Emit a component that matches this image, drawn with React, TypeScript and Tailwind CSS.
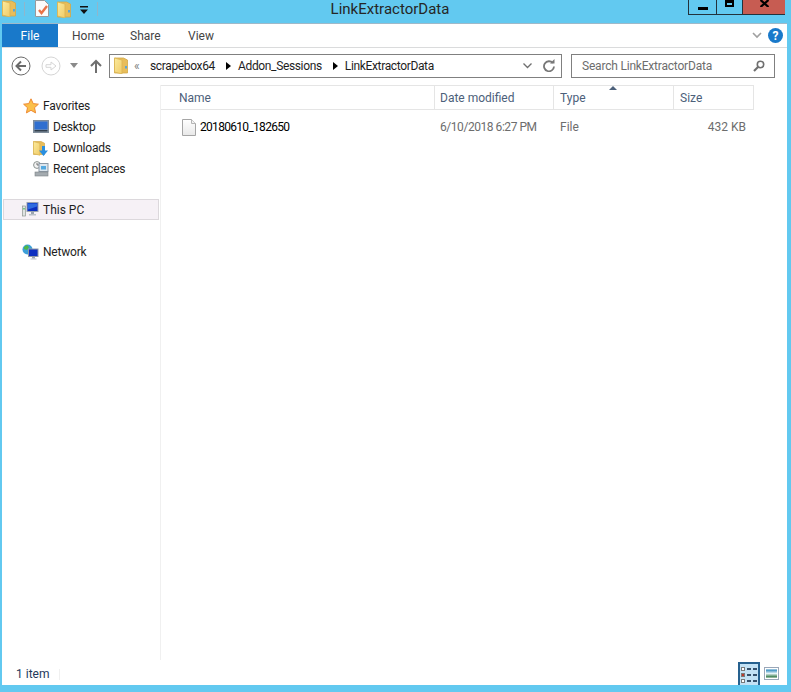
import React from "react"

function FolderIcon({ className }: { className?: string }) {
  return (
    <svg viewBox="0 0 14 17" className={className}>
      <defs>
        <linearGradient id="fold" x1="0" y1="0" x2="1" y2="1">
          <stop offset="0" stopColor="#fbeb9e" />
          <stop offset="1" stopColor="#f0cb68" />
        </linearGradient>
      </defs>
      <path d="M0.5 1h9l4 2v13h-13z" fill="#e8bd5a" stroke="#d2a848" strokeWidth="0.8" />
      <path d="M0.5 1l7.5 2v14L0.5 15z" fill="url(#fold)" stroke="#d9b453" strokeWidth="0.8" />
      <rect x="11" y="9" width="2" height="2.5" fill="#5aa6d8" />
    </svg>
  )
}

function BackButton({ disabled }: { disabled?: boolean }) {
  const c = disabled ? "#d5d5d5" : "#6a6a6a"
  return (
    <svg width="20" height="20" viewBox="0 0 20 20">
      <circle cx="10" cy="10" r="9" fill="#fff" stroke={c} strokeWidth="1" />
      {disabled ? (
        <path d="M5 8.7h5V6l5 4-5 4v-2.7H5z" fill="none" stroke={c} strokeWidth="1" />
      ) : (
        <path d="M15 10H6M10 5.5L5.5 10l4.5 4.5" fill="none" stroke={c} strokeWidth="2" />
      )}
    </svg>
  )
}

function Row({ icon, label, indent }: { icon: React.ReactNode; label: string; indent?: boolean }) {
  return (
    <div className={`flex h-[21px] items-center gap-[4px] ${indent ? "pl-[30px]" : "pl-[20px]"}`}>
      <div className="flex h-[18px] w-[17px] items-center justify-center">{icon}</div>
      <span className="text-[12px] tracking-[-0.2px] text-[#1e1e1e]">{label}</span>
    </div>
  )
}

function PcIcon({ small }: { small?: boolean }) {
  return (
    <svg width="17" height="15" viewBox="0 0 17 15">
      <rect x="5" y="0.5" width="11" height="9" fill="#0c2fc0" stroke="#9aa4b0" />
      <path d="M6 1.5h9v3l-9 3z" fill="#2f6be0" />
      <rect x="9" y="10" width="3" height="2" fill="#9aa4b0" />
      <rect x="7" y="12" width="7" height="1.5" fill="#b9c0c8" />
      {small && <rect x="0.5" y="4" width="3" height="10" fill="#dfe3e2" stroke="#8d9490" strokeWidth="0.7" />}
      {small && <rect x="1.4" y="6" width="1.2" height="1.5" fill="#39b54a" />}
    </svg>
  )
}

export default function App() {
  return (
    <div className="flex h-[692px] w-[791px] flex-col overflow-hidden bg-[#62c9f0] font-['Roboto',sans-serif]">
      {/* Title bar */}
      <div className="flex h-[23px] shrink-0">
        <div className="flex w-[280px] items-start">
          <FolderIcon className="ml-[2px] h-[17px] w-[14px]" />
          <div className="ml-[8px] mt-[2px] h-[14px] w-px bg-[#8fb6cc]" />
          <svg width="15" height="17" viewBox="0 0 15 17" className="ml-[10px]">
            <path d="M0.5 0.5h9l4 4v12h-13z" fill="#fbfbfb" stroke="#9a9a9a" />
            <path d="M4 10l2.5 3L12 6" fill="none" stroke="#ea7348" strokeWidth="2.4" />
          </svg>
          <FolderIcon className="ml-[7px] mt-px h-[17px] w-[14px]" />
          <svg width="8" height="9" viewBox="0 0 8 9" className="ml-[9px] mt-[6px]">
            <path d="M0 0h8v1.5H0zM0 3.5h8L4 8z" fill="#111" />
          </svg>
          <div className="ml-[9px] mt-[2px] h-[14px] w-px bg-[#8fb6cc]" />
        </div>
        <div className="-mt-[1px] w-[220px] text-center text-[15px] leading-[20px] text-[#262626]">LinkExtractorData</div>
        <div className="flex flex-1 justify-end">
          <div className="flex h-[15px] items-start pr-[6px]">
            <div className="flex h-[15px] w-[29px] items-center justify-center border border-t-0 border-[#23323c]">
              <div className="mt-[2px] h-[3px] w-[10px] bg-black" />
            </div>
            <div className="flex h-[15px] w-[26px] items-start justify-center border-b border-r border-[#23323c]">
              <div className="h-[7px] w-[9px] border-2 border-t-[3px] border-black" />
            </div>
            <div className="flex h-[15px] w-[42px] items-start justify-center border-b border-[#23323c] bg-[#c75c52]">
              <svg width="9" height="7" viewBox="0 0 9 7">
                <path d="M0.5 0l8 7M8.5 0l-8 7" stroke="#000" strokeWidth="2.2" />
              </svg>
            </div>
          </div>
        </div>
      </div>

      {/* Window client */}
      <div className="ml-[2px] mr-[4px] flex h-[662px] flex-col border-t border-[#9fb9c9] bg-white">
        {/* Ribbon tabs */}
        <div className="flex h-[24px] shrink-0 items-center border-b border-[#dadbdc]">
          <div className="flex h-[23px] w-[56px] items-center justify-center bg-[#1979ca] text-[12px] text-white">File</div>
          <span className="ml-[14px] w-[58px] text-[12px] text-[#444]">Home</span>
          <span className="w-[58px] text-[12px] text-[#444]">Share</span>
          <span className="text-[12px] text-[#444]">View</span>
          <svg width="10" height="7" viewBox="0 0 10 7" className="ml-auto">
            <path d="M1 1l4 4 4-4" fill="none" stroke="#a0a0a0" strokeWidth="1.6" />
          </svg>
          <div className="ml-[6px] mr-[4px] flex h-[15px] w-[15px] items-center justify-center rounded-full bg-[#1979ca] text-[12px] font-bold text-white">?</div>
        </div>

        {/* Address row */}
        <div className="flex h-[37px] shrink-0 items-center pb-[2px]">
          <div className="ml-[9px]"><BackButton /></div>
          <div className="ml-[10px]"><BackButton disabled /></div>
          <svg width="8" height="5" viewBox="0 0 8 5" className="ml-[9px]">
            <path d="M0 0h8L4 5z" fill="#8a8a8a" />
          </svg>
          <svg width="12" height="14" viewBox="0 0 12 14" className="ml-[12px]">
            <path d="M6 14V2M1 7l5-5 5 5" fill="none" stroke="#6f6f6f" strokeWidth="2" />
          </svg>
          <div className="ml-[7px] flex h-[24px] w-[453px] items-center border border-[#808080] pl-[4px] text-[12px] tracking-[-0.35px] text-[#1e1e1e]">
            <FolderIcon className="h-[17px] w-[14px]" />
            <span className="ml-[6px] w-[16px] text-[#808080]">«</span>
            <span>scrapebox64</span>
            <span className="ml-[11px] mr-[7px] h-0 w-0 border-y-[4px] border-l-[5px] border-y-transparent border-l-black" />
            <span>Addon_Sessions</span>
            <span className="ml-[11px] mr-[7px] h-0 w-0 border-y-[4px] border-l-[5px] border-y-transparent border-l-black" />
            <span>LinkExtractorData</span>
            <svg width="9" height="6" viewBox="0 0 9 6" className="ml-auto">
              <path d="M0.5 0.5l4 4 4-4" fill="none" stroke="#6f6f6f" strokeWidth="1.3" />
            </svg>
            <svg width="12" height="13" viewBox="0 0 12 13" className="ml-[11px] mr-[6px]">
              <path d="M9.8 4A5 5 0 1 0 11 7.5" fill="none" stroke="#777" strokeWidth="1.8" />
              <path d="M7 4.5h4.5V0z" fill="#777" />
            </svg>
          </div>
          <div className="ml-[9px] flex h-[24px] w-[204px] items-center border border-[#808080] pl-[10px] text-[12px] tracking-[-0.2px] text-[#6d6d6d]">
            <span>Search LinkExtractorData</span>
            <svg width="12" height="12" viewBox="0 0 12 12" className="ml-auto mr-[9px]">
              <circle cx="7.5" cy="4.5" r="3.2" fill="none" stroke="#6f6f6f" strokeWidth="1.6" />
              <path d="M5 7L1 11" stroke="#6f6f6f" strokeWidth="2.2" />
            </svg>
          </div>
        </div>

        {/* Body */}
        <div className="flex flex-1">
          {/* Navigation pane */}
          <div className="w-[159px] shrink-0 border-r border-[#f0f0f0] pt-[10px]">
            <Row
              label="Favorites"
              icon={
                <svg width="16" height="16" viewBox="0 0 16 16">
                  <path d="M8 0.8l2.2 4.8 5.2.6-3.9 3.5 1.1 5.2L8 12.3l-4.6 2.6 1.1-5.2L.6 6.2l5.2-.6z" fill="#fbc04a" stroke="#ee8a35" />
                </svg>
              }
            />
            <Row
              indent
              label="Desktop"
              icon={
                <svg width="16" height="13" viewBox="0 0 16 13">
                  <rect x="0.5" y="0.5" width="15" height="12" fill="#8e9dac" stroke="#7f8d9b" />
                  <rect x="1.5" y="1.5" width="13" height="8" fill="#2f6fd0" />
                  <rect x="1.5" y="10" width="13" height="1.5" fill="#33404d" />
                </svg>
              }
            />
            <Row
              indent
              label="Downloads"
              icon={
                <div className="relative h-[16px] w-[15px]">
                  <FolderIcon className="h-[16px] w-[12px]" />
                  <svg width="9" height="10" viewBox="0 0 9 10" className="absolute bottom-0 right-0">
                    <path d="M3 0h3v4.5h3L4.5 10 0 4.5h3z" fill="#2a8fe0" />
                  </svg>
                </div>
              }
            />
            <Row
              indent
              label="Recent places"
              icon={
                <svg width="16" height="16" viewBox="0 0 16 16">
                  <circle cx="4" cy="4" r="3.4" fill="#f3f3f3" stroke="#8a9290" />
                  <path d="M4 2v2h2" fill="none" stroke="#555" strokeWidth="0.8" />
                  <rect x="6" y="2.5" width="9" height="8" fill="#dce6ee" stroke="#8b98a5" />
                  <rect x="8" y="5" width="5" height="3.5" fill="#54a9e0" />
                  <rect x="2" y="11" width="13" height="4" fill="#a4abb0" stroke="#7d8487" strokeWidth="0.6" />
                </svg>
              }
            />
            <div className="mx-px mt-[20px] flex h-[21px] w-[156px] items-center gap-[4px] border border-[#dcd8dc] bg-[#f6f1f6] pl-[18px]">
              <div className="flex w-[17px] justify-center"><PcIcon small /></div>
              <span className="text-[12px] text-[#1e1e1e]">This PC</span>
            </div>
            <div className="mt-[21px]">
              <Row
                label="Network"
                icon={
                  <svg width="17" height="16" viewBox="0 0 17 16">
                    <circle cx="5.5" cy="5.5" r="5" fill="#3d9fd8" />
                    <path d="M2 3l3-2 2 2-2 3-3-1zM6 8l2 2-2 1z" fill="#4fb848" />
                    <rect x="6.5" y="5" width="9.5" height="7.5" fill="#0c2fc0" stroke="#8f99a5" />
                    <rect x="10" y="13" width="3" height="1.5" fill="#9aa4b0" />
                    <rect x="8.5" y="14.5" width="6" height="1" fill="#b9c0c8" />
                  </svg>
                }
              />
            </div>
          </div>

          {/* File list */}
          <div className="flex-1">
            <div className="flex h-[25px] w-[593px] border-y border-[#e5e5e5] text-[12px] text-[#4c607a]">
              <div className="flex w-[274px] items-center border-r border-[#e5e5e5] pl-[18px]">Name</div>
              <div className="flex w-[119px] items-center border-r border-[#e5e5e5] pl-[5px]">Date modified</div>
              <div className="relative flex w-[120px] items-center border-r border-[#e5e5e5] pl-[6px]">
                Type
                <span className="absolute left-[55px] top-0 h-0 w-0 border-x-[4px] border-b-[4px] border-x-transparent border-b-[#4c607a]" />
              </div>
              <div className="flex w-[80px] items-center border-r border-[#e5e5e5] pl-[6px]">Size</div>
            </div>
            <div className="flex h-[34px] w-[593px] items-center text-[12px] text-[#6d6d6d]">
              <div className="flex w-[274px] items-center pl-[21px]">
                <svg width="14" height="17" viewBox="0 0 14 17">
                  <defs>
                    <linearGradient id="doc" x1="0" y1="0" x2="0" y2="1">
                      <stop offset="0" stopColor="#ffffff" />
                      <stop offset="1" stopColor="#e8e8e8" />
                    </linearGradient>
                  </defs>
                  <path d="M0.5 0.5h9l4 4v12h-13z" fill="url(#doc)" stroke="#a5a5a5" />
                  <path d="M9.5 0.5v4h4" fill="#f2f2f2" stroke="#b5b5b5" />
                </svg>
                <span className="ml-[4px] tracking-[-0.7px] text-black">20180610_182650</span>
              </div>
              <div className="w-[119px] pl-[5px] tracking-[-0.45px]">6/10/2018 6:27 PM</div>
              <div className="w-[120px] pl-[6px]">File</div>
              <div className="w-[80px] pr-[8px] text-right">432 KB</div>
            </div>
          </div>
        </div>

        {/* Status bar */}
        <div className="flex h-[25px] shrink-0 items-end">
          <div className="mb-[5px] flex h-[12px] items-center">
            <span className="ml-[14px] w-[43px] text-[12px] text-[#1e395b]">1 item</span>
            <div className="h-[11px] w-px bg-[#f0f0f0]" />
          </div>
          <div className="ml-auto flex items-center">
            <div className="flex h-[23px] w-[22px] flex-col items-center justify-center gap-[2px] border-2 border-b-0 border-[#26618f] bg-[#c3e2f5]">
              {[0, 1, 2].map((i) => (
                <div key={i} className="flex items-center gap-[2px]">
                  <div className={`h-[4px] w-[4px] border border-[#7a7a7a] ${i === 1 ? "bg-[#c0392b]" : "bg-white"}`} />
                  <div className="h-[2px] w-[4px] bg-[#35506b]" />
                  <div className="h-[2px] w-[4px] bg-[#35506b]" />
                </div>
              ))}
            </div>
            <svg width="15" height="13" viewBox="0 0 15 13" className="ml-[4px] mr-[8px]">
              <defs>
                <linearGradient id="pic" x1="0" y1="0" x2="0" y2="1">
                  <stop offset="0" stopColor="#1f7fb8" />
                  <stop offset="0.5" stopColor="#e6f4f7" />
                  <stop offset="1" stopColor="#1f6a33" />
                </linearGradient>
              </defs>
              <rect x="0.5" y="0.5" width="14" height="12" fill="#fff" stroke="#9aa7b8" />
              <rect x="2" y="2.5" width="11" height="8" fill="url(#pic)" />
            </svg>
          </div>
        </div>
      </div>
    </div>
  )
}
